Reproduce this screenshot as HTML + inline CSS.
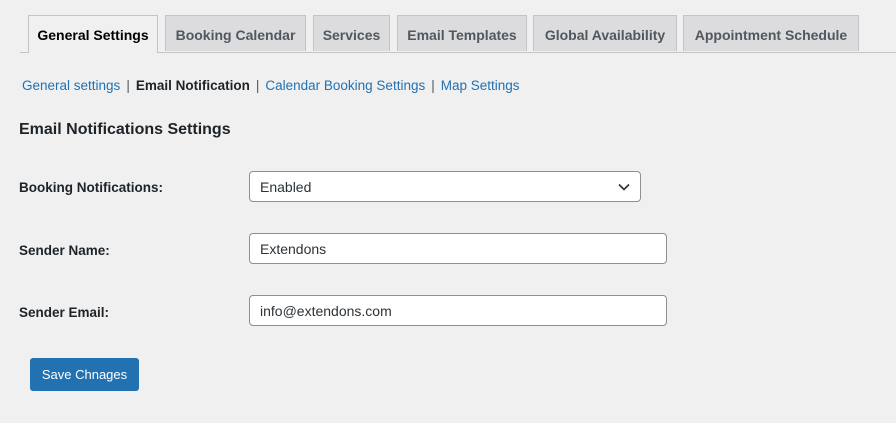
<!DOCTYPE html>
<html><head><style>
body{margin:0;width:896px;height:423px;background:#f0f0f1;font-family:"Liberation Sans",sans-serif;position:relative;overflow:hidden;color:#1d2327}
.line{position:absolute;left:20px;right:0;top:52px;height:1px;background:#c3c4c7}
.tab{position:absolute;top:15px;height:36px;border:1px solid #c3c4c7;border-bottom:none;background:#dcdcde;color:#50575e;font-weight:bold;font-size:14px;line-height:39px;text-align:center;box-sizing:border-box}
.tab.a{background:#f0f0f1;color:#000;height:38px}
.sub{position:absolute;left:22px;top:78px;font-size:13.5px;color:#2271b1}
.sub b{color:#1d2327}
.sub span{color:#50575e;margin:0 6px}
h2{position:absolute;left:19px;top:121px;margin:0;font-size:16px;font-weight:bold;color:#1d2327}
.lbl{position:absolute;left:19px;font-size:13.5px;font-weight:bold;color:#1d2327}
.in{position:absolute;left:249px;height:31px;background:#fff;border:1px solid #8c8f94;border-radius:4px;box-sizing:border-box;font-size:14px;line-height:31px;padding-left:10px;color:#2c3338}
.btn{position:absolute;left:30px;top:358px;width:109px;height:33px;background:#2271b1;border-radius:3px;color:#fff;font-size:13px;line-height:34px;text-align:center}
</style></head><body>
<div class="line"></div>
<div class="tab a" style="left:28px;width:130px">General Settings</div>
<div class="tab" style="left:165px;width:141px">Booking Calendar</div>
<div class="tab" style="left:313px;width:77px">Services</div>
<div class="tab" style="left:397px;width:130px">Email Templates</div>
<div class="tab" style="left:533px;width:144px">Global Availability</div>
<div class="tab" style="left:683px;width:176px">Appointment Schedule</div>
<div class="sub">General settings<span>|</span><b>Email Notification</b><span>|</span>Calendar Booking Settings<span>|</span>Map Settings</div>
<h2>Email Notifications Settings</h2>
<div class="lbl" style="top:180px">Booking Notifications:</div>
<div class="in" style="top:171px;width:392px">Enabled
<svg style="position:absolute;right:10px;top:11px" width="12" height="8" viewBox="0 0 12 8"><path d="M1 1.5l5 5 5-5" fill="none" stroke="#2c3338" stroke-width="1.6"/></svg></div>
<div class="lbl" style="top:243px">Sender Name:</div>
<div class="in" style="top:233px;width:418px">Extendons</div>
<div class="lbl" style="top:305px">Sender Email:</div>
<div class="in" style="top:295px;width:418px">info@extendons.com</div>
<div class="btn">Save Chnages</div>
</body></html>
